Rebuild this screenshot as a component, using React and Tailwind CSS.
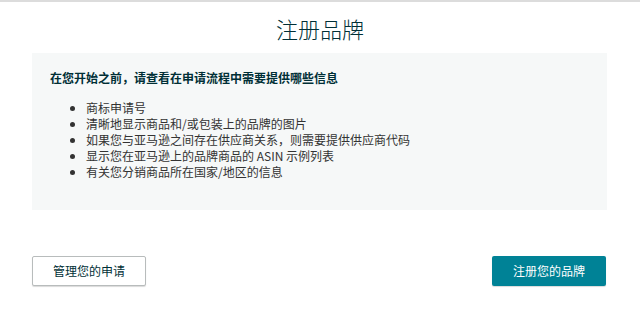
import React from "react";

const items = [
  "商标申请号",
  "清晰地显示商品和/或包装上的品牌的图片",
  "如果您与亚马逊之间存在供应商关系，则需要提供供应商代码",
  "显示您在亚马逊上的品牌商品的 ASIN 示例列表",
  "有关您分销商品所在国家/地区的信息",
];

const App = () => {
  return (
    <div
      className="min-h-[311px] bg-white border-t-2 border-[#dcdcdc] px-8 text-[#0f1111]"
      style={{ fontFamily: '"Noto Sans CJK SC", "Liberation Sans", sans-serif' }}
    >
      {/* Title */}
      <h1 className="pt-[10px] text-center text-[22px] leading-[32px] font-light text-[#002f36]">
        注册品牌
      </h1>

      {/* Info box */}
      <section className="mt-[9px] mr-px bg-[#f6f8f8] pl-[18px] pt-4 pb-[30px]">
        <h2 className="text-[12px] leading-[18px] font-bold text-[#002f36]">
          在您开始之前，请查看在申请流程中需要提供哪些信息
        </h2>
        <ul className="mt-[13px] list-disc pl-[36px] text-[12px] leading-[16px] text-[#333333]">
          {items.map((item, idx) => (
            <li key={idx}>{item}</li>
          ))}
        </ul>
      </section>

      {/* Actions */}
      <div className="mt-[46px] flex justify-between pr-[2px]">
        <button className="h-[30px] w-[114px] rounded-[2px] border border-[#b8bcbc] bg-white text-[12px] text-[#002f36] shadow-[0_1px_1px_rgba(0,0,0,0.15)]">
          管理您的申请
        </button>
        <button className="h-[30px] w-[114px] rounded-[2px] bg-[#008296] text-[12px] text-white shadow-[0_1px_1px_rgba(0,0,0,0.15)]">
          注册您的品牌
        </button>
      </div>
    </div>
  );
};

export default App;
